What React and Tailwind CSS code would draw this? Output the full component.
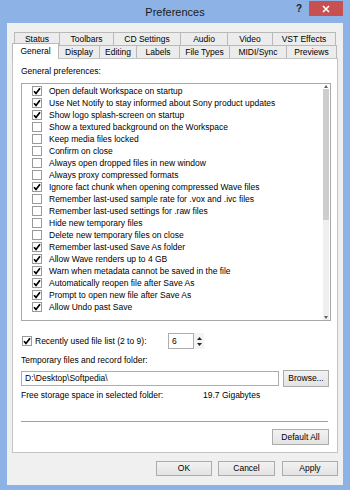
import React from "react";

const items = [
  ["Open default Workspace on startup", true],
  ["Use Net Notify to stay informed about Sony product updates", true],
  ["Show logo splash-screen on startup", true],
  ["Show a textured background on the Workspace", false],
  ["Keep media files locked", false],
  ["Confirm on close", false],
  ["Always open dropped files in new window", false],
  ["Always proxy compressed formats", false],
  ["Ignore fact chunk when opening compressed Wave files", true],
  ["Remember last-used sample rate for .vox and .ivc files", false],
  ["Remember last-used settings for .raw files", false],
  ["Hide new temporary files", false],
  ["Delete new temporary files on close", false],
  ["Remember last-used Save As folder", true],
  ["Allow Wave renders up to 4 GB", true],
  ["Warn when metadata cannot be saved in the file", true],
  ["Automatically reopen file after Save As", true],
  ["Prompt to open new file after Save As", true],
  ["Allow Undo past Save", true],
];

function Check({ checked }) {
  return (
    <span className="w-[10px] h-[10px] border border-[#9a9a9a] bg-white flex items-center justify-center shrink-0">
      {checked && (
        <svg width="8" height="8" viewBox="0 0 8 8">
          <path d="M1 4.2 L3 6.4 L7 1.2" stroke="#000" strokeWidth="1.7" fill="none" />
        </svg>
      )}
    </span>
  );
}

function Btn({ w, children }) {
  return (
    <div
      className={`${w} h-full border border-[#acacac] bg-linear-to-b from-[#f2f2f2] to-[#e3e3e3] flex items-center justify-center`}
    >
      {children}
    </div>
  );
}

const row1 = [
  ["Status", "w-[45px]"],
  ["Toolbars", "w-[54px]"],
  ["CD Settings", "w-[67px]"],
  ["Audio", "w-[47px]"],
  ["Video", "w-[45px]"],
  ["VST Effects", "w-[64px]"],
];
const row2 = [
  ["Display", "w-[41px]"],
  ["Editing", "w-[37px]"],
  ["Labels", "w-[43px]"],
  ["File Types", "w-[50px]"],
  ["MIDI/Sync", "w-[57px]"],
  ["Previews", "w-[50px]"],
];

export default function App() {
  return (
    <div className="w-[350px] h-[490px] bg-[#8db3e6] flex flex-col font-['Liberation_Sans',Arial,sans-serif] text-[8.5px] text-black leading-[11px] overflow-hidden">
      {/* title bar */}
      <div className="h-[23px] shrink-0 grid grid-cols-[1fr_auto_1fr]">
        <div />
        <div className="text-[11px] text-[#1a1a1a] pt-[6px] leading-[13px]">Preferences</div>
        <div className="flex justify-end items-start pr-[7px]">
          <div className="w-[20px] h-[15px] flex items-center justify-center text-[10px] font-bold text-[#222] mt-[1px]">?</div>
          <div className="w-[34px] h-[15px] mt-[1px] bg-[#c75050] flex items-center justify-center">
            <svg width="8" height="8" viewBox="0 0 8 8">
              <path d="M1 1 L7 7 M7 1 L1 7" stroke="#fff" strokeWidth="1.6" />
            </svg>
          </div>
        </div>
      </div>

      {/* client */}
      <div className="mx-[7px] h-[462px] bg-[#f0f0f0] px-[5px] pt-[9px] pb-[9px] flex flex-col">
        {/* tabs row 1 */}
        <div className="flex pl-[2px] h-[13px]">
          {row1.map(([t, w], i) => (
            <div
              key={t}
              className={`${w} h-full border-t border-l border-[#b9b9b9] bg-[#ececec] flex items-center justify-center ${
                i === row1.length - 1 ? "border-r" : ""
              }`}
            >
              {t}
            </div>
          ))}
        </div>
        {/* tabs row 2 */}
        <div className="flex items-end h-[13px]">
          <div className="w-[47px] h-[16px] mb-[-1px] relative z-10 bg-white border-t border-l border-r border-[#b9b9b9] flex items-center justify-center pb-[1px]">
            General
          </div>
          {row2.map(([t, w]) => (
            <div
              key={t}
              className={`${w} h-full border-t border-r border-[#b9b9b9] bg-[#ececec] flex items-center justify-center`}
            >
              {t}
            </div>
          ))}
        </div>

        {/* panel */}
        <div className="h-[395px] border border-[#c4c4c4] bg-white pl-[8px] pr-[6px] pt-[7px] flex flex-col">
          <div className="h-[11px]">General preferences:</div>
          <div className="mt-[6px] h-[238px] border border-[#a8a8a8] flex">
            <div className="flex-1 flex flex-col pt-[1px] pl-[10px]">
              {items.map(([t, c]) => (
                <div key={t} className="h-[12px] flex items-center gap-[7px] whitespace-nowrap">
                  <Check checked={c} />
                  <span className="leading-[12px]">{t}</span>
                </div>
              ))}
            </div>
            <div className="w-[6px] mr-[1px] flex flex-col">
              <div className="h-[5px] flex items-center justify-center">
                <svg width="4" height="3" viewBox="0 0 4 3">
                  <path d="M0 3 L2 0 L4 3 Z" fill="#606060" />
                </svg>
              </div>
              <div className="h-[131px] bg-[#cdcdcd]" />
              <div className="flex-1 bg-[#efefef]" />
              <div className="h-[5px] bg-[#efefef] flex items-center justify-center">
                <svg width="4" height="3" viewBox="0 0 4 3">
                  <path d="M0 0 L2 3 L4 0 Z" fill="#606060" />
                </svg>
              </div>
            </div>
          </div>

          {/* recently used */}
          <div className="mt-[12px] h-[16px] flex items-center">
            <div className="w-[147px] flex items-center gap-[3px] pl-[1px]">
              <Check checked={true} />
              <span>Recently used file list (2 to 9):</span>
            </div>
            <div className="w-[26px] h-full border border-[#abadb3] bg-white flex items-center pl-[3px]">6</div>
            <div className="w-[10px] h-full flex flex-col items-center justify-around bg-[#f4f4f4] py-[2px]">
              <svg width="5" height="3" viewBox="0 0 5 3">
                <path d="M0 3 L2.5 0 L5 3 Z" fill="#222" />
              </svg>
              <svg width="5" height="3" viewBox="0 0 5 3">
                <path d="M0 0 L2.5 3 L5 0 Z" fill="#222" />
              </svg>
            </div>
          </div>

          <div className="mt-[6px] h-[11px]">Temporary files and record folder:</div>

          <div className="mt-[4px] h-[17px] flex items-center">
            <div className="w-[258px] h-[15px] border border-[#abadb3] bg-white flex items-center pl-[3px]">
              D:\Desktop\Softpedia\
            </div>
            <div className="ml-[4px] h-[17px]">
              <Btn w="w-[46px]">Browse...</Btn>
            </div>
          </div>

          <div className="mt-[3px] h-[11px] flex">
            <div className="w-[182px]">Free storage space in selected folder:</div>
            <div>19.7 Gigabytes</div>
          </div>

          <div className="mt-[20px] w-[307px] border-t border-[#a0a0a0]" />

          <div className="mt-[7px] h-[16px] flex justify-end pr-[2px]">
            <Btn w="w-[57px]">Default All</Btn>
          </div>
        </div>

        {/* bottom buttons */}
        <div className="mt-[8px] h-[15px] flex justify-end">
          <Btn w="w-[56px]">OK</Btn>
          <div className="ml-[6px] h-full">
            <Btn w="w-[57px]">Cancel</Btn>
          </div>
          <div className="ml-[7px] h-full">
            <Btn w="w-[56px]">Apply</Btn>
          </div>
        </div>
      </div>
    </div>
  );
}
